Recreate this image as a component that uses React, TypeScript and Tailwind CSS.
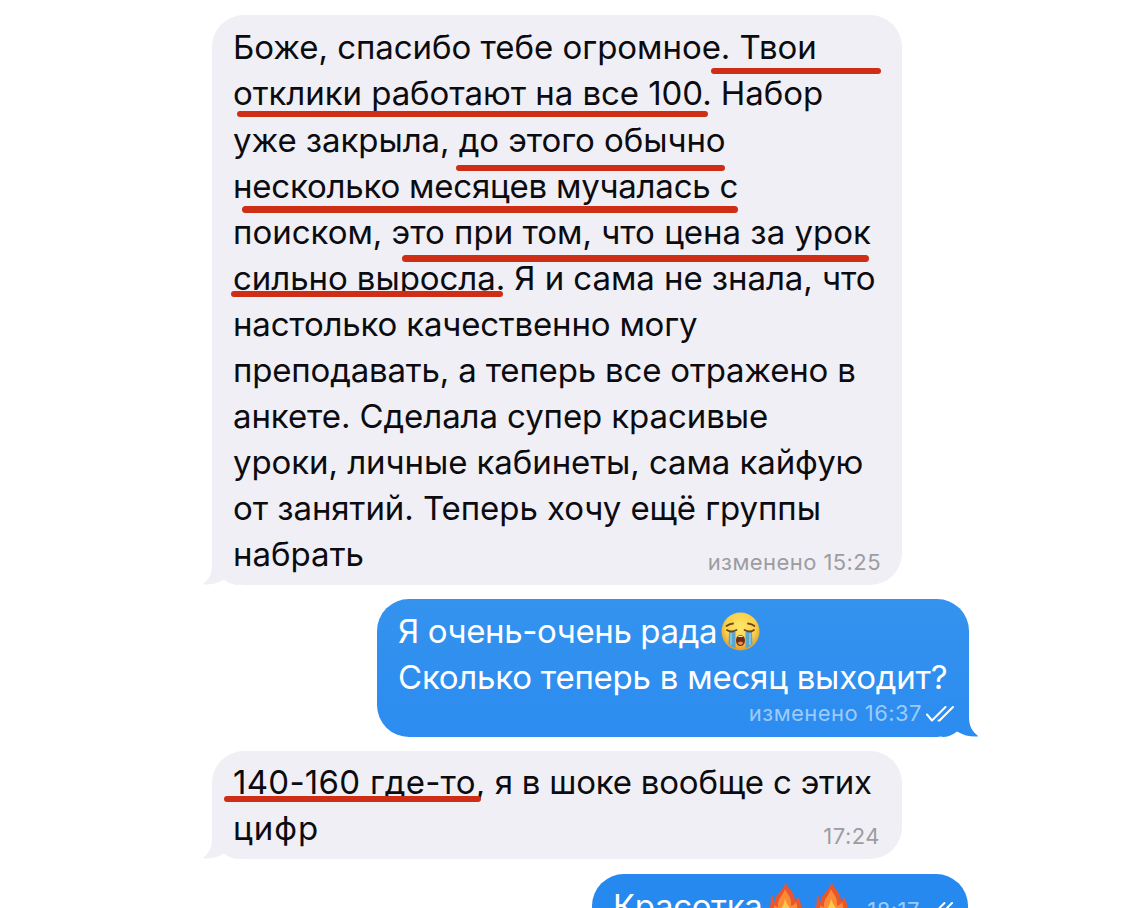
import React from 'react';

interface Line {
  text: string;
  tracking: string;
}

const firstMessage: Line[] = [
  { text: 'Боже, спасибо тебе огромное. Твои', tracking: 'tracking-[-0.04px]' },
  { text: 'отклики работают на все 100. Набор', tracking: 'tracking-[-0.07px]' },
  { text: 'уже закрыла, до этого обычно', tracking: 'tracking-[-0.07px]' },
  { text: 'несколько месяцев мучалась с', tracking: 'tracking-[-0.21px]' },
  { text: 'поиском, это при том, что цена за урок', tracking: 'tracking-[-0.01px]' },
  { text: 'сильно выросла. Я и сама не знала, что', tracking: 'tracking-[-0.07px]' },
  { text: 'настолько качественно могу', tracking: 'tracking-[-0.19px]' },
  { text: 'преподавать, а теперь все отражено в', tracking: 'tracking-[-0.18px]' },
  { text: 'анкете. Сделала супер красивые', tracking: 'tracking-[-0.1px]' },
  { text: 'уроки, личные кабинеты, сама кайфую', tracking: 'tracking-[-0.08px]' },
  { text: 'от занятий. Теперь хочу ещё группы', tracking: 'tracking-[-0.07px]' },
  { text: 'набрать', tracking: 'tracking-[0px]' },
];

// Marker strokes drawn over the first message
const marks = [
  'left-[499px] top-[53px] w-[170px] h-[6px]',
  'left-[25px] top-[96px] w-[471px] h-[6px]',
  'left-[244px] top-[150px] w-[269px] h-[6px]',
  'left-[30px] top-[191px] w-[496px] h-[7px]',
  'left-[190px] top-[240px] w-[467px] h-[7px]',
  'left-[19px] top-[276px] w-[272px] h-[6px]',
];

const Tail: React.FC<{ className: string }> = ({ className }) => (
  <svg className={`absolute bottom-0 h-[36px] w-[36px] ${className}`} viewBox="0 0 36 36" fill="currentColor">
    <path d="M9 0V16C9 25 6 30 .5 34.5C0 35 0 35.5 1 35.5C8 35.8 14 34.5 21 30.5C25 34 30 36 36 36V0Z" />
  </svg>
);

const Checks: React.FC = () => (
  <svg className="h-[16px] w-[28px]" viewBox="0 0 28 16" fill="none" stroke="currentColor" strokeWidth="2" strokeLinecap="round" strokeLinejoin="round">
    <path d="M1 8.5L6 14.5L19.500 1M12.500 14.5L13.500 14.500L27 1" />
  </svg>
);

const Crying: React.FC = () => (
  <svg className="h-[39px] w-[39px]" viewBox="0 0 39 39">
    <defs>
      <radialGradient id="face" cx=".5" cy=".4" r=".6">
        <stop offset="0" stopColor="#ffe86a" />
        <stop offset=".65" stopColor="#fbd04b" />
        <stop offset="1" stopColor="#e09a2b" />
      </radialGradient>
    </defs>
    <circle cx="19.5" cy="19.5" r="19" fill="url(#face)" />
    <path d="M8 20H14.5V36.5Q10.5 35 7.5 32ZM24.5 20H31L31.5 32Q28.5 35 24.5 36.5Z" fill="#5aa6cf" />
    <path d="M10 21V33M29 21V33" stroke="#8fcbe4" strokeWidth="1.5" />
    <path d="M5.5 14Q8 12 12 11.5M33.5 14Q31 12 27 11.5M6 18Q10 21 15.5 18M23.5 18Q29 21 33 18" fill="none" stroke="#754416" strokeWidth="1.8" strokeLinecap="round" />
    <ellipse cx="19.5" cy="28.5" rx="4.5" ry="5.5" fill="#6d2d10" />
    <path d="M16.5 31Q19.5 28 22.5 31Q19.5 35 16.5 31Z" fill="#ed8a5a" />
    <path d="M16.5 25Q19.5 22.5 22.5 25Z" fill="#fff3dc" />
  </svg>
);

const Fire: React.FC = () => (
  <svg className="h-[42px] w-[34px]" viewBox="0 0 34 42">
    <path d="M18 0C18 4 24 8 26 14C27 17 27 18 27 20C29 18 29 16 29 14C33 19 34 24 33 29C32 37 25 41 17 41C8 41 1 36 1 28C1 24 3 22 3 19C2 17 3 15 5 13C4 16 6 18 7 20C8 17 7 16 9 13C12 9 15 7 18 0Z" fill="#e8562f" />
    <path d="M17 7C19 12 24 15 23 24C26 23 27 22 28 20C32 31 28 40 17 40C6 40 3 31 7 23C8 25 9 25 10 25C9 17 15 14 17 7Z" fill="#fb8a35" />
    <path d="M17 15C17 22 24 25 23 32C22 37 20 39 17 39C12 39 9 35 11 30C13 26 17 23 17 15Z" fill="#ffc950" />
  </svg>
);

const App: React.FC = () => {
  return (
    <div className="flex h-[908px] w-[1135px] flex-col overflow-hidden bg-white pt-[15px] font-['Inter',sans-serif] text-[33px] leading-[46.1px] text-[#0c0c10]">
      {/* Incoming */}
      <div className="relative ml-[212px] h-[570px] w-[690px] shrink-0 rounded-[32px] bg-[#f0eff5] pl-[21px] pt-[9.4px]">
        <Tail className="-left-[9px] text-[#f0eff5]" />
        <div className="relative">
          {firstMessage.map((line) => (
            <div key={line.text} className="whitespace-nowrap">
              <span className={line.tracking}>{line.text}</span>
            </div>
          ))}
        </div>
        <span className="absolute bottom-[10px] right-[21px] text-[22px] leading-[26px] tracking-[0.43px] text-[#9c9ca1]">изменено 15:25</span>
        {marks.map((mark) => (
          <div key={mark} className={`absolute rounded-full bg-[#cf2e16] ${mark}`}></div>
        ))}
      </div>

      {/* Outgoing */}
      <div className="relative ml-[377px] mt-[14px] h-[138px] w-[592px] shrink-0 rounded-[32px] bg-linear-to-b from-[#3493ee] to-[#2c8cf0] pl-[21px] pt-[9px] text-white">
        <Tail className="-right-[9px] -scale-x-100 text-[#2c8cf0]" />
        <div className="flex h-[46px] items-center whitespace-nowrap">
          <span className="tracking-[-0.38px]">Я очень-очень рада</span>
          <span className="ml-[4px]"><Crying /></span>
        </div>
        <div className="relative whitespace-nowrap">
          <span className="tracking-[-0.23px]">Сколько теперь в месяц выходит?</span>
        </div>
        <div className="absolute bottom-[10px] right-[15px] flex items-center gap-[4px] text-[22px] leading-[26px]">
          <span className="relative -top-px tracking-[0.45px] text-[#9ccbfb]">изменено 16:37</span>
          <Checks />
        </div>
      </div>

      {/* Incoming */}
      <div className="relative ml-[212px] mt-[14px] h-[108px] w-[690px] shrink-0 rounded-[32px] bg-[#f0eff5] pl-[21px] pt-[8px]">
        <Tail className="-left-[9px] text-[#f0eff5]" />
        <div className="relative whitespace-nowrap">
          <span className="tracking-[0.28px]">140-160 где-то,</span>
          <span className="tracking-[-0.21px]"> я в шоке вообще с этих</span>
        </div>
        <div className="relative whitespace-nowrap">
          <span className="tracking-[1px]">цифр</span>
        </div>
        <span className="absolute bottom-[10px] right-[22px] text-[22px] leading-[26px] tracking-[0.5px] text-[#9c9ca1]">17:24</span>
        <div className="absolute left-[12px] top-[45px] h-[6px] w-[257px] rounded-full bg-[#cf2e16]"></div>
      </div>

      {/* Outgoing, runs past the bottom edge */}
      <div className="relative ml-[592px] mt-[15px] flex h-[64px] w-[376px] shrink-0 items-start rounded-[32px] bg-[#2589f0] pl-[21px] pt-[9px] text-white">
        <span className="tracking-[-0.35px]">Красотка</span>
        <div className="-mt-px ml-[6px] flex gap-[12px]">
          <Fire />
          <Fire />
        </div>
        <div className="absolute right-[15px] top-[23px] flex items-center gap-[5px] text-[22px] leading-[26px]">
          <span className="tracking-[0.5px] text-[#9ccbfb]">18:17</span>
          <Checks />
        </div>
      </div>
    </div>
  );
};

export default App;
